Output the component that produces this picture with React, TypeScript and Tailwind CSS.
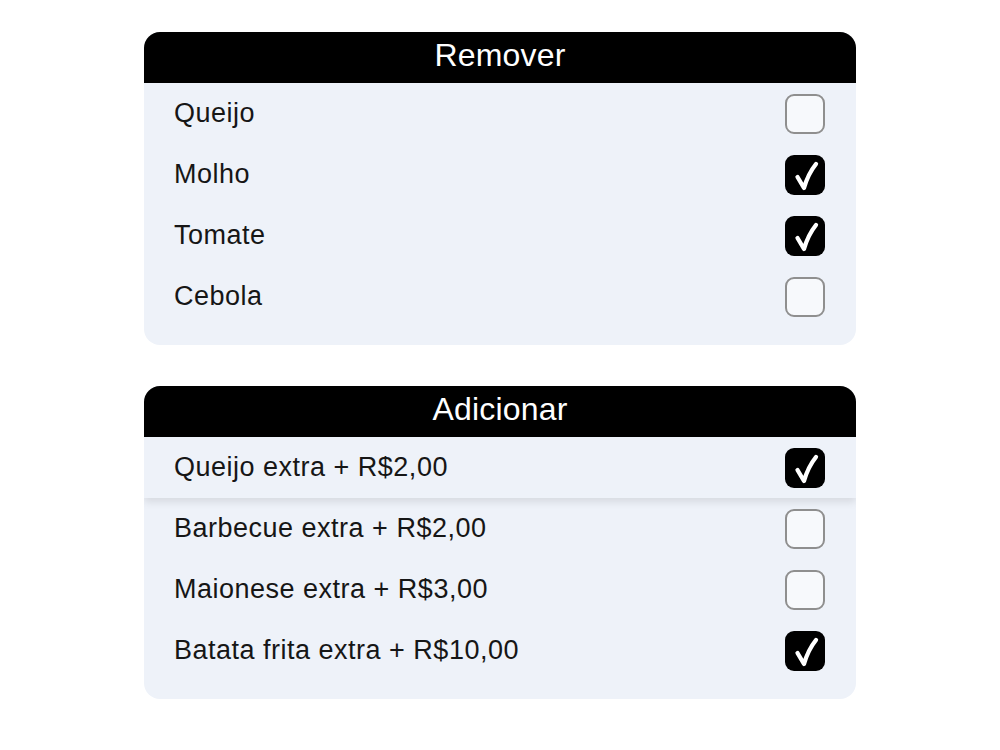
import { useState } from "react";

type Item = { label: string; checked: boolean };

const Check = () => (
    <svg width="40" height="40" viewBox="0 0 40 40" className="block">
        <path d="M12.5 22 L19 33 Q23 19 31 9" fill="none" stroke="white" strokeWidth="4.3" strokeLinecap="round" strokeLinejoin="round" />
    </svg>
);

const Box = ({ checked, onClick }: { checked: boolean; onClick: () => void }) => (
    <button
        onClick={onClick}
        className={
            checked
                ? "w-[40px] h-[40px] rounded-[9px] bg-black flex items-center justify-center"
                : "w-[40px] h-[40px] rounded-[9px] border-2 border-[#8f8f8f] bg-[#f7f9fc]"
        }
    >
        {checked && <Check />}
    </button>
);

const Card = ({ title, items, highlight }: { title: string; items: Item[]; highlight?: number }) => {
    const [list, setList] = useState(items);

    return (
        <div className="w-[712px] rounded-2xl bg-[#eef2f9] overflow-hidden pb-[18px]">
            <div className="h-[51px] bg-black text-white text-[32px] leading-[47px] text-center tracking-[0.2px]">
                {title}
            </div>
            {list.map((item, index) => (
                <div
                    key={index}
                    className={
                        index === highlight
                            ? "h-[61px] flex items-center justify-between pl-[30px] pr-[31px] shadow-[0_4px_8px_rgba(0,0,0,0.1)] relative"
                            : "h-[61px] flex items-center justify-between pl-[30px] pr-[31px]"
                    }
                >
                    <span className="text-[27px] tracking-[0.5px] text-[#161616]">{item.label}</span>
                    <Box
                        checked={item.checked}
                        onClick={() =>
                            setList(list.map((it, i) => (i === index ? { ...it, checked: !it.checked } : it)))
                        }
                    />
                </div>
            ))}
        </div>
    );
};

export default function App() {
    return (
        <div className="w-[1000px] h-[750px] bg-white flex flex-col items-center pt-[32px] gap-[41px]" style={{ fontFamily: '"Liberation Sans", Arial, sans-serif' }}>
            <Card
                title="Remover"
                items={[
                    { label: "Queijo", checked: false },
                    { label: "Molho", checked: true },
                    { label: "Tomate", checked: true },
                    { label: "Cebola", checked: false },
                ]}
            />
            <Card
                title="Adicionar"
                highlight={0}
                items={[
                    { label: "Queijo extra + R$2,00", checked: true },
                    { label: "Barbecue extra + R$2,00", checked: false },
                    { label: "Maionese extra + R$3,00", checked: false },
                    { label: "Batata frita extra + R$10,00", checked: true },
                ]}
            />
        </div>
    );
}
